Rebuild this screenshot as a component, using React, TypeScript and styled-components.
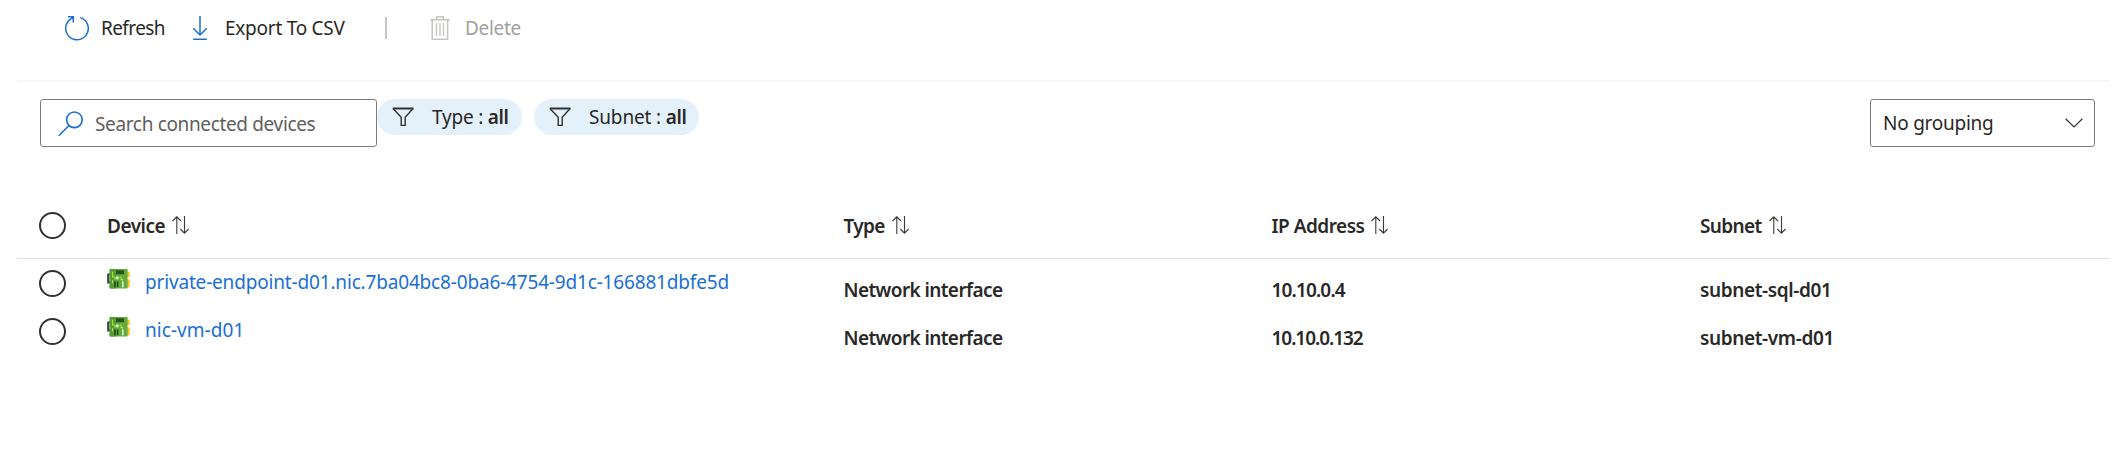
import React from 'react';
import styled, { createGlobalStyle } from 'styled-components';

const BLUE = '#1a6fd4';
const INK = '#292827';

const GlobalStyle = createGlobalStyle`
  *, *::before, *::after { box-sizing: border-box; }
  body {
    margin: 0;
    background: #fff;
    color: ${INK};
    font: 400 19px/24px "Noto Sans", "Open Sans", sans-serif;
  }
  svg { display: block; flex: none; }
`;

const Page = styled.main`
  height: 461px;
  padding: 0 3px 0 17px;
  overflow: hidden;
`;

const Label = styled.span<{ $track?: number; $strong?: boolean }>`
  white-space: pre;
  letter-spacing: ${(p) => p.$track ?? 0}px;
  font-weight: ${(p) => (p.$strong ? 600 : 400)};
`;

const Toolbar = styled.div`
  display: flex;
  align-items: center;
  height: 82px;
  padding: 0 0 24px 47px;
  border-bottom: 2px solid #f6f6f6;
`;

const Command = styled.button<{ $gap: number; $width: number }>`
  display: flex;
  align-items: center;
  gap: ${(p) => p.$gap}px;
  width: ${(p) => p.$width}px;
  padding: 0;
  border: 0;
  background: none;
  color: inherit;
  font: inherit;
  &:disabled { color: #a19f9d; }
`;

const Divider = styled.span`
  width: 2px;
  height: 22px;
  margin-right: 43px;
  background: #c8c6c4;
`;

const Filters = styled.div`
  display: flex;
  align-items: flex-start;
  height: 110px;
  padding: 17px 15px 0 23px;
`;

const SearchBox = styled.div`
  display: flex;
  align-items: center;
  gap: 11px;
  width: 337px;
  height: 48px;
  padding: 1px 0 0 17px;
  border: 1px solid #7f7d7b;
  border-radius: 3px;
  color: #605e5c;
`;

const Pill = styled.button<{ $width: number }>`
  display: flex;
  align-items: center;
  width: ${(p) => p.$width}px;
  height: 36px;
  margin-right: 12px;
  padding: 0 0 0 15px;
  border: 0;
  border-radius: 18px;
  background: #e4f1fb;
  color: ${INK};
  font: inherit;
  svg { margin-right: 18px; }
`;

const Dropdown = styled.div`
  display: flex;
  align-items: center;
  justify-content: space-between;
  width: 225px;
  height: 48px;
  margin-left: auto;
  padding: 0 11px 0 12px;
  border: 1px solid #7f7d7b;
  border-radius: 3px;
`;

const Row = styled.div<{ $head?: boolean }>`
  display: grid;
  grid-template-columns: 90px 736.5px 428px 428.5px 1fr;
  align-items: center;
  height: ${(p) => (p.$head ? 67 : 48)}px;
  border-bottom: ${(p) => (p.$head ? '1px solid #e1dfdd' : '0')};
`;

const Radio = styled.span`
  width: 27px;
  height: 27px;
  margin-left: 22.4px;
  border: 2px solid #323130;
  border-radius: 50%;
`;

const HeadCell = styled.div`
  display: flex;
  align-items: center;
  gap: 7px;
  span { padding-top: 2px; }
`;

const DeviceCell = styled.div`
  display: flex;
  align-items: flex-start;
  height: 28px;
  gap: 14px;
`;

const DeviceLink = styled.a`
  padding-top: 1px;
  color: ${BLUE};
  text-decoration: none;
`;

const ValueCell = styled.div`
  padding-top: 14px;
`;

const RefreshIcon = () => (
  <svg width="26" height="26" viewBox="0 0 26 26" fill="none" stroke={BLUE} strokeWidth="1.5">
    <path d="M16.2 2.6A11.3 11.3 0 1 1 9.2 2.8M4 1.8H9.3V7.4" />
  </svg>
);

const DownloadIcon = () => (
  <svg width="16" height="26" viewBox="0 0 16 26" fill="none" stroke={BLUE} strokeWidth="1.5">
    <path d="M8 1V20M1.2 13.3L8 20L14.8 13.3M1.2 24.3H14.8" />
  </svg>
);

const TrashIcon = () => (
  <svg width="20" height="26" viewBox="0 0 20 26" fill="none" stroke="#c8c6c4" strokeWidth="1.6">
    <path d="M0.3 4.8H19.7M6.6 4.5V1.8H13.4V4.5M2.2 5V24.2H17.6V5" />
    <path strokeWidth="1.4" d="M6.5 8V21M10 8V21M13.5 8V21" />
  </svg>
);

const SearchIcon = () => (
  <svg width="26" height="26" viewBox="0 0 26 26" fill="none" stroke={BLUE} strokeWidth="1.6">
    <circle cx="16.4" cy="8.8" r="7.8" />
    <path d="M11 14.5L0.8 24.8" />
  </svg>
);

const FilterIcon = () => (
  <svg width="22" height="20" viewBox="0 0 22 20" fill="none" stroke="#323130" strokeWidth="1.4">
    <path d="M1.4 2L9.2 10.2V18.4H13.2V10.2L20.7 2" />
    <path strokeWidth="2" d="M0.7 1.5H21.6" />
  </svg>
);

const ChevronIcon = () => (
  <svg width="18" height="10" viewBox="0 0 18 10" fill="none" stroke="#323130" strokeWidth="1.2">
    <path d="M0.6 0.8L9 9L17.4 0.8" />
  </svg>
);

const SortIcon = () => (
  <svg width="17" height="18" viewBox="0 0 17 18" fill="none" stroke="#3b3a39" strokeWidth="1.1">
    <path d="M4.8 18V0.8M0.5 5L4.8 0.8L9 5M12.5 0V17.2M8.3 13L12.5 17.2L16.6 13" />
  </svg>
);

const NicIcon = () => (
  <svg width="24" height="20" viewBox="0 0 24 20">
    <path d="M3 5.5H1.2V13.5H3" fill="none" stroke="#3c3c41" strokeWidth="2" />
    <path d="M20 2.5H22.8V8H20ZM20 10.5H22.8V18.3H20Z" fill="#ffc61a" />
    <rect x="2.6" width="18" height="19.6" rx="0.8" fill="#62ab3b" />
    <path d="M2.6 0.8Q2.6 0 3.4 0H9V19.6H3.4Q2.6 19.6 2.6 18.8Z" fill="#559c34" />
    <rect x="9" y="1.3" width="8" height="4" fill="#27521b" />
    <path d="M5.5 2.5V8H8V11M14 7V10.5H15.5V16M5.5 14.5V11" fill="none" stroke="#a2e23f" strokeWidth="1.1" />
    <circle cx="10.4" cy="9" r="1.4" fill="#f2ffe5" />
    <path d="M8 12.5V18.3M10.6 12.5V18.3" stroke="#1f4a1c" strokeWidth="1.5" />
    <path d="M15.8 12.4V18.3" stroke="#dcebd5" strokeWidth="1.7" />
  </svg>
);

const columns = [
  { name: 'Device', track: -0.5 },
  { name: 'Type', track: -0.65 },
  { name: 'IP Address', track: -0.5 },
  { name: 'Subnet', track: -0.65 },
];

const devices = [
  {
    name: 'private-endpoint-d01.nic.7ba04bc8-0ba6-4754-9d1c-166881dbfe5d',
    nameTrack: -0.17,
    ip: '10.10.0.4',
    ipTrack: -0.85,
    subnet: 'subnet-sql-d01',
  },
  { name: 'nic-vm-d01', nameTrack: 0.05, ip: '10.10.0.132', ipTrack: -1.05, subnet: 'subnet-vm-d01' },
];

export default function App() {
  return (
    <Page>
      <GlobalStyle />
      <Toolbar>
        <Command $gap={11} $width={128}>
          <RefreshIcon />
          <Label $track={-0.6}>Refresh</Label>
        </Command>
        <Command $gap={17} $width={193}>
          <DownloadIcon />
          <Label $track={-0.25}>Export To CSV</Label>
        </Command>
        <Divider />
        <Command $gap={15} $width={100} disabled>
          <TrashIcon />
          <Label $track={-0.3}>Delete</Label>
        </Command>
      </Toolbar>
      <Filters>
        <SearchBox>
          <SearchIcon />
          <Label $track={-0.35}>Search connected devices</Label>
        </SearchBox>
        <Pill $width={145}>
          <FilterIcon />
          <Label $track={-0.2}>Type : </Label>
          <Label $track={-0.4} $strong>all</Label>
        </Pill>
        <Pill $width={165}>
          <FilterIcon />
          <Label $track={-0.15}>Subnet : </Label>
          <Label $track={-0.4} $strong>all</Label>
        </Pill>
        <Dropdown>
          <Label $track={-0.25}>No grouping</Label>
          <ChevronIcon />
        </Dropdown>
      </Filters>
      <Row $head>
        <Radio />
        {columns.map((c) => (
          <HeadCell key={c.name}>
            <Label $track={c.track} $strong>{c.name}</Label>
            <SortIcon />
          </HeadCell>
        ))}
      </Row>
      {devices.map((d) => (
        <Row key={d.name}>
          <Radio />
          <DeviceCell>
            <NicIcon />
            <DeviceLink>
              <Label $track={d.nameTrack}>{d.name}</Label>
            </DeviceLink>
          </DeviceCell>
          <ValueCell>
            <Label $track={-0.6} $strong>Network interface</Label>
          </ValueCell>
          <ValueCell>
            <Label $track={d.ipTrack} $strong>{d.ip}</Label>
          </ValueCell>
          <ValueCell>
            <Label $track={-0.37} $strong>{d.subnet}</Label>
          </ValueCell>
        </Row>
      ))}
    </Page>
  );
}
